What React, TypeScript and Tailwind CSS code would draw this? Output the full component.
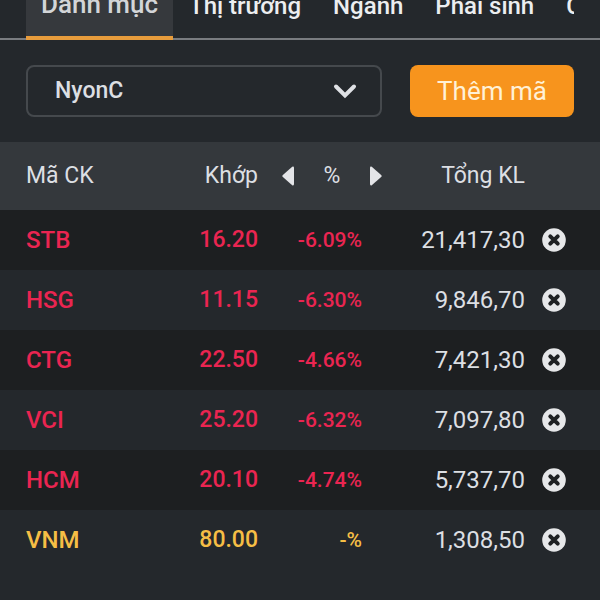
import React, { useState } from 'react';

type Stock = {
  code: string;
  price: string;
  change: string;
  volume: string;
  trend: 'down' | 'flat';
};

const initialStocks: Stock[] = [
  { code: 'STB', price: '16.20', change: '-6.09%', volume: '21,417,30', trend: 'down' },
  { code: 'HSG', price: '11.15', change: '-6.30%', volume: '9,846,70', trend: 'down' },
  { code: 'CTG', price: '22.50', change: '-4.66%', volume: '7,421,30', trend: 'down' },
  { code: 'VCI', price: '25.20', change: '-6.32%', volume: '7,097,80', trend: 'down' },
  { code: 'HCM', price: '20.10', change: '-4.74%', volume: '5,737,70', trend: 'down' },
  { code: 'VNM', price: '80.00', change: '-%', volume: '1,308,50', trend: 'flat' },
];

const tabs = ['Danh mục', 'Thị trường', 'Ngành', 'Phái sinh', 'C'];

const RemoveIcon: React.FC = () => (
  <svg viewBox="0 0 24 24" className="block size-6" aria-hidden="true">
    <circle cx="12" cy="12" r="11.8" fill="#e6e7e9" />
    <path d="M8.3 8.3l7.4 7.4M15.7 8.3l-7.4 7.4" stroke="#1f2123" strokeWidth="4" strokeLinecap="round" />
  </svg>
);

const App: React.FC = () => {
  const [activeTab, setActiveTab] = useState('Danh mục');
  const [stocks, setStocks] = useState(initialStocks);

  const removeStock = (code: string) => setStocks(stocks.filter((s) => s.code !== code));

  return (
    <div className="min-h-screen overflow-hidden bg-[#24282c] font-['Roboto',sans-serif] text-[#dcdfe3]">
      {/* Tabs, partly scrolled off the top */}
      <nav className="-mt-6 border-b-2 border-[#797c80] px-[26px]">
        <div className="-mb-0.5 flex overflow-hidden">
          {tabs.map((tab) => (
            <button
              key={tab}
              onClick={() => setActiveTab(tab)}
              className={`shrink-0 cursor-pointer border-b-4 leading-8 font-medium whitespace-nowrap ${
                tab === activeTab
                  ? 'border-[#e79c3c] bg-[#36393d] px-[15px] pt-3 pb-4 text-[26px] text-[#d3d5d8]'
                  : 'border-transparent px-4 py-3.5 text-2xl text-[#eceef0]'
              }`}
            >
              {tab}
            </button>
          ))}
        </div>
      </nav>

      {/* Watchlist picker */}
      <div className="flex gap-7 px-[26px] py-[25px]">
        <div className="relative min-w-0 flex-1">
          <select
            aria-label="Danh mục"
            className="h-13 w-full appearance-none rounded-lg border-2 border-[#45494d] bg-transparent px-[27px] text-[23px] leading-8 font-medium"
          >
            <option>NyonC</option>
          </select>
          <svg viewBox="0 0 24 16" className="pointer-events-none absolute top-[18px] right-[25px] h-4 w-6" aria-hidden="true">
            <path d="M3 3.5l9 9 9-9" fill="none" stroke="#dfe1e5" strokeWidth="4" strokeLinecap="round" />
          </svg>
        </div>
        <button className="h-13 w-[164px] cursor-pointer rounded-lg bg-[#f7941d] text-[26px] text-[#fff1d6]">
          Thêm mã
        </button>
      </div>

      {/* Stock list */}
      <table className="w-full table-fixed border-collapse text-2xl leading-8">
        <thead>
          <tr className="h-17 bg-[#34383c] text-[23px]">
            <th className="w-[25%] pl-[26px] text-left font-normal">Mã CK</th>
            <th className="w-[18%] text-right font-normal">Khớp</th>
            <th className="w-[22%] pr-2 pl-6 font-normal">
              <div className="flex items-center justify-between">
                <button aria-label="Cột trước" className="cursor-pointer">
                  <svg viewBox="0 0 12 20" className="block h-5 w-3" fill="#e4e5e8" aria-hidden="true">
                    <path d="M0.6 9.2L10.2 0.8Q12 0 12 2v16q0 2-1.8 1.2L0.6 10.8Q0 10 0.6 9.2z" />
                  </svg>
                </button>
                %
                <button aria-label="Cột sau" className="cursor-pointer">
                  <svg viewBox="0 0 12 20" className="block h-5 w-3" fill="#e4e5e8" aria-hidden="true">
                    <path d="M11.4 9.2L1.8 0.8Q0 0 0 2v16q0 2 1.8 1.2l9.6-8.4Q12 10 11.4 9.2z" />
                  </svg>
                </button>
              </div>
            </th>
            <th className="text-right font-normal">Tổng KL</th>
            <th className="w-[75px]" aria-label="Xóa" />
          </tr>
        </thead>
        <tbody>
          {stocks.map((stock) => (
            <tr
              key={stock.code}
              className={`h-15 odd:bg-[#1d1f21] ${stock.trend === 'down' ? 'text-[#ea2551]' : 'text-[#f6be45]'}`}
            >
              <td className="pl-[26px] font-medium">{stock.code}</td>
              <td className="text-right text-[23px] font-medium">{stock.price}</td>
              <td className="pr-7 text-right text-[21px] font-medium">{stock.change}</td>
              <td className="text-right text-[#dcdfe3]">{stock.volume}</td>
              <td className="pl-[17px]">
                <button
                  aria-label={`Xóa ${stock.code}`}
                  onClick={() => removeStock(stock.code)}
                  className="block cursor-pointer"
                >
                  <RemoveIcon />
                </button>
              </td>
            </tr>
          ))}
        </tbody>
      </table>
    </div>
  );
};

export default App;
